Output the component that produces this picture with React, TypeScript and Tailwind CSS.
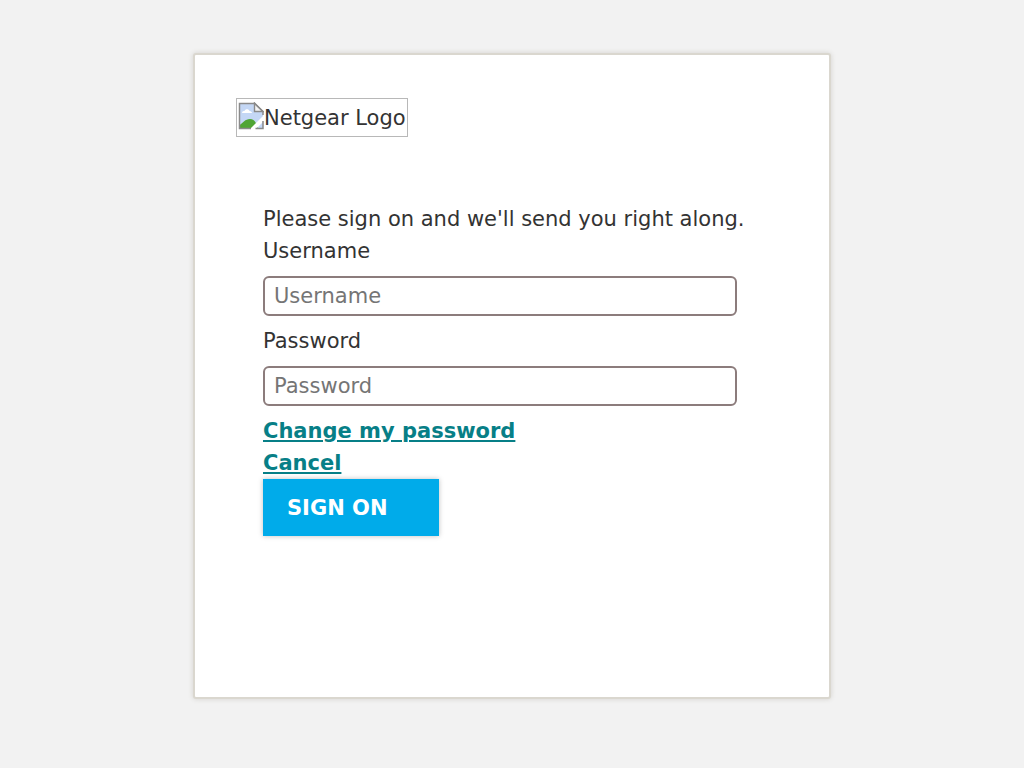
import React from "react";

function BrokenImageIcon() {
  return (
    <svg viewBox="0 0 26 28" className="h-7 w-[26px] shrink-0" aria-hidden="true">
      <path d="M1 1H16.500L25 9.500V27H1Z" fill="#c4d7f5" />
      <path d="M4 11c0-2 2-2 2.500-2C7 6.500 11 6.500 11.500 9 13 9 14 10 14 11Z" fill="#fff" />
      <path d="M1.500 26V23C5 21 7 17 12 17c4 0 6 3 8 9Z" fill="#4fa535" />
      <path d="M11 28L26 13V19L17 28Z" fill="#fff" />
      <path d="M16.500 1V9.500H25Z" fill="#f4f4f4" stroke="#8a8a8a" strokeWidth="1.400" />
      <path d="M13 26.500H1.500V1.500H16.500L25 9.500V13" fill="none" stroke="#8a8a8a" strokeWidth="1.500" />
      <path d="M25 19V26.500H17.500" fill="none" stroke="#8a8a8a" strokeWidth="1.500" />
    </svg>
  );
}

type FieldProps = { id: string; label: string; type: string };

function Field({ id, label, type }: FieldProps) {
  return (
    <div>
      <label htmlFor={id} className="block">
        {label}
      </label>
      <input
        id={id}
        name={id}
        type={type}
        placeholder={label}
        className="my-[9px] block h-10 w-full rounded-md border-2 border-[#8c7c7c] bg-white px-[9px] placeholder:text-[#757575]"
      />
    </div>
  );
}

export default function App() {
  return (
    <main className="min-h-screen bg-[#f2f2f2] px-4 py-[53px] font-['DejaVu_Sans',sans-serif] text-[21px] leading-8 text-[#333333]">
      <section className="mx-auto min-h-[646px] w-full max-w-[638px] rounded-[3px] border-2 border-[#dad7cf] bg-white px-[41px] pt-[43px] pb-10 shadow-[0_0_5px_rgba(90,80,60,0.2)]">
        <div
          role="img"
          aria-label="Netgear Logo"
          className="inline-flex h-[39px] items-start border border-[#b8b8b8] pt-[3px] pr-px pl-px align-top whitespace-nowrap"
        >
          <BrokenImageIcon />
          <span>Netgear Logo</span>
        </div>
        <form className="mt-[66px] pr-[51px] pl-[27px]" onSubmit={(e) => e.preventDefault()}>
          <p className="sm:whitespace-nowrap">Please sign on and we'll send you right along.</p>
          <Field id="username" label="Username" type="text" />
          <Field id="password" label="Password" type="password" />
          <div className="flex flex-col items-start font-bold text-[#077f87]">
            <a href="#change" className="underline">
              Change my password
            </a>
            <a href="#cancel" className="underline">
              Cancel
            </a>
          </div>
          <button
            type="submit"
            className="block h-[57px] w-44 bg-[#00abea] px-6 text-left font-bold text-white shadow-[0_0_5px_rgba(0,0,0,0.25)]"
          >
            SIGN ON
          </button>
        </form>
      </section>
    </main>
  );
}
